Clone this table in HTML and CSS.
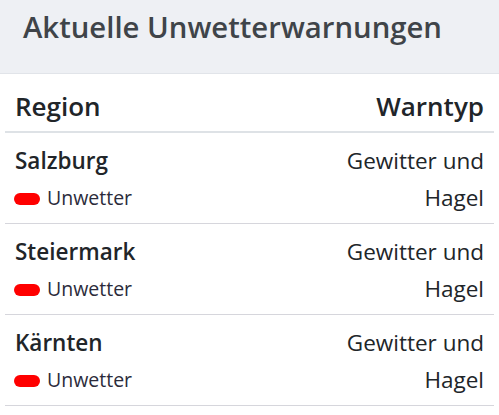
FILE: index.html
```html
<!DOCTYPE html>
<html lang="de">
<head>
<meta charset="utf-8">
<title>Aktuelle Unwetterwarnungen</title>
<link rel="stylesheet" href="styles.css">
</head>
<body>
<header class="page-head">
  <h1 class="title">Aktuelle Unwetterwarnungen</h1>
</header>
<section class="warnings">
  <div class="row head">
    <div class="col-region">Region</div>
    <div class="col-type">Warntyp</div>
  </div>
  <div class="row">
    <div class="col-region">
      <div class="name">Salzburg</div>
      <div class="level"><span class="pill"></span>Unwetter</div>
    </div>
    <div class="col-type">Gewitter und<br>Hagel</div>
  </div>
  <div class="row">
    <div class="col-region">
      <div class="name">Steiermark</div>
      <div class="level"><span class="pill"></span>Unwetter</div>
    </div>
    <div class="col-type">Gewitter und<br>Hagel</div>
  </div>
  <div class="row">
    <div class="col-region">
      <div class="name">Kärnten</div>
      <div class="level"><span class="pill"></span>Unwetter</div>
    </div>
    <div class="col-type">Gewitter und<br>Hagel</div>
  </div>
</section>
</body>
</html>
```

FILE: styles.css
```css
html, body {
  margin: 0;
  padding: 0;
  background: #ffffff;
  font-family: "Open Sans", "Noto Sans", "Liberation Sans", sans-serif;
  color: #212529;
}

.page-head {
  background: #eef0f4;
  border-bottom: 1px solid #e1e4e9;
  height: 74px;
  box-sizing: border-box;
  padding: 7px 23px 0;
}

.title {
  margin: 0;
  font-size: 29.3px;
  line-height: 40px;
  font-weight: 600;
  color: #3f4449;
}

.warnings {
  margin: 0 5px;
}

.row {
  display: flex;
  justify-content: space-between;
  align-items: flex-start;
  padding: 9px 10px 7px;
  border-bottom: 1px solid #d6d6dc;
  font-size: 22.5px;
  line-height: 37px;
}

.row.head {
  padding: 14px 10px 7px;
  border-bottom: 2px solid #dee2e6;
  font-size: 26px;
  line-height: 36px;
  font-weight: 600;
}

.col-type {
  text-align: right;
}

.name {
  font-weight: 600;
}

.level {
  font-size: 19.5px;
  color: #2b2b3b;
}

.pill {
  display: inline-block;
  width: 26px;
  height: 12px;
  border-radius: 6px;
  background: #ff0000;
  margin: 0 7px 0 -1px;
}
```
